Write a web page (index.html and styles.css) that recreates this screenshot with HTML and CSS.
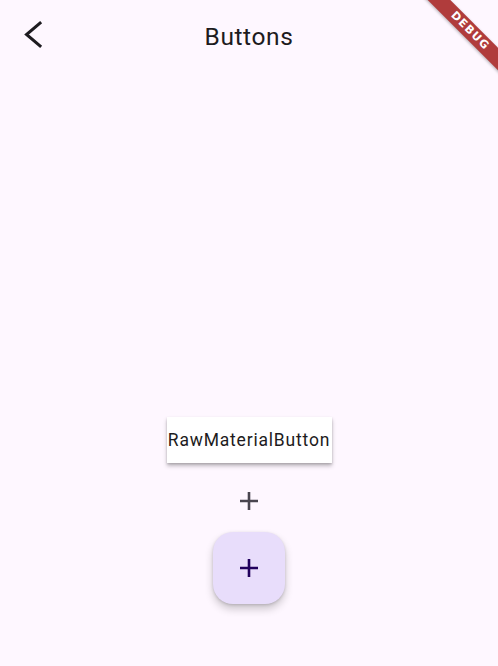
FILE: index.html
```html
<!DOCTYPE html>
<html>
<head>
<meta charset="utf-8">
<link rel="stylesheet" href="styles.css">
</head>
<body>
<div class="app">
  <header class="appbar">
    <button class="back" aria-label="Back">
      <svg width="24" height="30" viewBox="0 0 24 30"><path d="M17 3 L3.5 14.5 L17 26" fill="none" stroke="#1D1B20" stroke-width="3" stroke-linecap="square"/></svg>
    </button>
    <h1 class="title">Buttons</h1>
  </header>
  <main class="content">
    <button class="raw-btn">RawMaterialButton</button>
    <span class="icon-btn">
      <svg width="20" height="20" viewBox="0 0 20 20"><path d="M10 1v18M1 10h18" stroke="#49454F" stroke-width="2.6"/></svg>
    </span>
    <button class="fab">
      <svg width="20" height="20" viewBox="0 0 20 20"><path d="M10 1v18M1 10h18" stroke="#21005D" stroke-width="2.6"/></svg>
    </button>
  </main>
  <div class="debug">DEBUG</div>
</div>
</body>
</html>
```
FILE: styles.css
```css
html, body {
  margin: 0;
  padding: 0;
  background: #FEF7FF;
  font-family: Roboto, "Liberation Sans", sans-serif;
  color: #1D1B20;
}
.app {
  position: relative;
  width: 498px;
  height: 666px;
  overflow: hidden;
}
.appbar {
  height: 70px;
  display: flex;
  align-items: center;
  justify-content: center;
  position: relative;
}
.back {
  position: absolute;
  left: 23px;
  top: 20px;
  border: 0;
  background: none;
  padding: 0;
  width: 24px;
  height: 30px;
  display: flex;
}
.title {
  margin: 3px 0 0 0;
  font-size: 24.5px;
  font-weight: 400;
  letter-spacing: 0.6px;
  line-height: 30px;
  color: #1D1B20;
}
.content {
  display: flex;
  flex-direction: column;
  align-items: center;
  padding-top: 347px;
}
.raw-btn {
  width: 165px;
  height: 46px;
  border: 0;
  background: #FFFFFF;
  font-family: Roboto, "Liberation Sans", sans-serif;
  font-size: 17.5px;
  letter-spacing: 0.8px;
  color: #1D1B20;
  padding: 0;
  box-shadow: 0 3px 4px rgba(0,0,0,0.25), 0 1px 2px rgba(0,0,0,0.15);
}
.icon-btn {
  margin-top: 28px;
  width: 20px;
  height: 20px;
  display: flex;
}
.fab {
  margin-top: 21px;
  width: 72px;
  height: 72px;
  border: 0;
  border-radius: 20px;
  background: #E8DDFB;
  display: flex;
  align-items: center;
  justify-content: center;
  padding: 0;
  box-shadow: 0 5px 8px rgba(0,0,0,0.2), 0 1px 3px rgba(0,0,0,0.15);
}
.debug {
  position: absolute;
  left: 405px;
  top: 23px;
  width: 130px;
  height: 16px;
  line-height: 16px;
  transform: rotate(45deg);
  background: #B03C3C;
  color: #fff;
  font-family: "DejaVu Sans", sans-serif;
  font-weight: 700;
  font-size: 11px;
  letter-spacing: 1.2px;
  text-align: center;
  box-shadow: 0 1px 3px rgba(0,0,0,0.3);
}
```
